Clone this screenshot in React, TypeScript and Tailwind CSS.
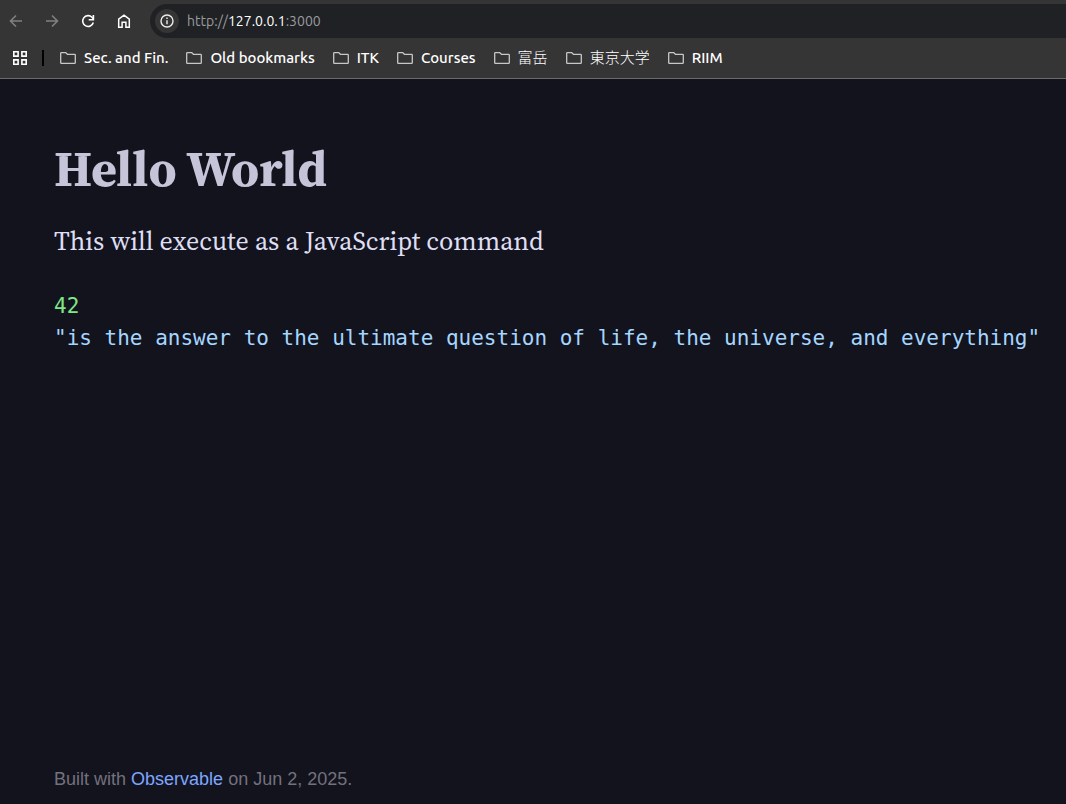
import type { ReactNode } from "react";

const bookmarks = [
  { name: "Sec. and Fin." },
  { name: "Old bookmarks" },
  { name: "ITK" },
  { name: "Courses" },
  { name: "富岳", lang: "ja" },
  { name: "東京大学", lang: "ja" },
  { name: "RIIM" },
];

function ToolButton({ label, disabled, children }: { label: string; disabled?: boolean; children: ReactNode }) {
  return (
    <button
      type="button"
      aria-label={label}
      disabled={disabled}
      className="flex size-5 items-center justify-center text-white disabled:text-[#808080]"
    >
      {children}
    </button>
  );
}

function FolderIcon() {
  return (
    <svg className="size-4 shrink-0" viewBox="0 0 16 16" fill="none" stroke="#c7c7c7" strokeWidth="1.3" aria-hidden="true">
      <path d="M.7 3.200c0-.4.3-.6.6-.6h4.400l1.700 1.700h7.200c.4 0 .7.3.7.7v7.800c0 .4-.3.6-.7.6H1.300c-.3 0-.6-.2-.6-.6Z" />
    </svg>
  );
}

export default function App() {
  return (
    <div className="flex min-h-screen flex-col bg-[#13131e]">
      <header className="border-b border-[#6a6a6a] bg-[#353535] font-['Ubuntu','Noto_Sans','Noto_Sans_CJK_JP',sans-serif] text-sm text-white">
        <div className="flex items-center pt-1 pl-1.5">
          <nav aria-label="Navigation" className="flex gap-4">
            <ToolButton label="Back" disabled>
              <svg className="size-4" viewBox="0 0 16 16" fill="none" stroke="currentColor" strokeWidth="1.6" aria-hidden="true">
                <path d="M14 8H3M8 2.500 2.500 8 8 13.500" />
              </svg>
            </ToolButton>
            <ToolButton label="Forward" disabled>
              <svg className="size-4" viewBox="0 0 16 16" fill="none" stroke="currentColor" strokeWidth="1.6" aria-hidden="true">
                <path d="M2 8h11M8 2.500 13.500 8 8 13.500" />
              </svg>
            </ToolButton>
            <ToolButton label="Reload">
              <svg className="size-4" viewBox="0 0 16 16" fill="none" stroke="currentColor" strokeWidth="1.6" aria-hidden="true">
                <path d="M13.300 9.500A5.400 5.400 0 1 1 12 4.300l1.500 1.700" />
                <path d="M13.400 2v4.700H8.700" />
              </svg>
            </ToolButton>
            <ToolButton label="Home">
              <svg className="size-4" viewBox="0 0 16 16" fill="none" stroke="currentColor" strokeWidth="1.5" aria-hidden="true">
                <path d="M2.700 6.200 8 2.200l5.300 4v8.100H9.900V9.300H6.100v5H2.700Z" />
              </svg>
            </ToolButton>
          </nav>
          <div className="ml-4 flex h-[34px] flex-1 items-center gap-2 rounded-l-full bg-[#202124] pl-[5px]">
            <button
              type="button"
              aria-label="View site information"
              className="flex size-6 items-center justify-center rounded-full bg-[#353535]"
            >
              <svg className="size-4" viewBox="0 0 16 16" fill="none" stroke="#ececec" strokeWidth="1.4" aria-hidden="true">
                <circle cx="8" cy="8" r="6" />
                <path d="M8 7.200v4M8 4.500v1.500" />
              </svg>
            </button>
            <div className="text-[#999b9e]">
              http://<span className="text-white">127.0.0.1</span>:3000
            </div>
          </div>
        </div>
        <nav aria-label="Bookmarks" className="flex h-10 items-center pl-3 text-[15px] font-medium">
          <button type="button" aria-label="Apps">
            <svg className="size-4" viewBox="0 0 16 16" fill="none" stroke="white" strokeWidth="1.6" aria-hidden="true">
              <path d="M1.800 1.800h4.300v4.300H1.800zM9.900 1.800h4.300v4.300H9.900zM1.800 9.900h4.300v4.300H1.800zM9.900 9.900h4.300v4.300H9.900z" />
            </svg>
          </button>
          <div className="mr-4 ml-3.5 h-4 w-0.5 bg-black" />
          <div className="flex gap-[18px]">
            {bookmarks.map(({ name, lang }) => (
              <button
                key={name}
                type="button"
                lang={lang}
                className="flex items-center gap-2 whitespace-nowrap [&:lang(ja)]:font-light"
              >
                <FolderIcon />
                {name}
              </button>
            ))}
          </div>
        </nav>
      </header>
      <main className="flex-1 px-[54px] pt-[60px]">
        <h1 className="font-['Source_Serif_4','Source_Serif_Pro','Noto_Serif_CJK_JP','Liberation_Serif',serif] text-[50px] leading-[60px] font-bold text-[#c6c4d8]">
          Hello World
        </h1>
        <p className="mt-[22px] font-['Source_Serif_4','Source_Serif_Pro','Noto_Serif_CJK_JP','Liberation_Serif',serif] text-[26px] leading-10 text-[#dfdff3]">
          This will execute as a JavaScript command
        </p>
        <div className="mt-[29px] font-['DejaVu_Sans_Mono',monospace] text-[21px] leading-8 whitespace-nowrap">
          <div className="text-[#7ee787]">42</div>
          <div className="text-[#a5d6ff]">
            "is the answer to the ultimate question of life, the universe, and everything"
          </div>
        </div>
      </main>
      <footer className="px-[54px] pb-[11px] font-['Liberation_Sans',sans-serif] text-lg text-[#72717d]">
        Built with{" "}
        <a href="https://observablehq.com/" className="text-[#7ea6ff]">
          Observable
        </a>{" "}
        on Jun 2, 2025.
      </footer>
    </div>
  );
}
